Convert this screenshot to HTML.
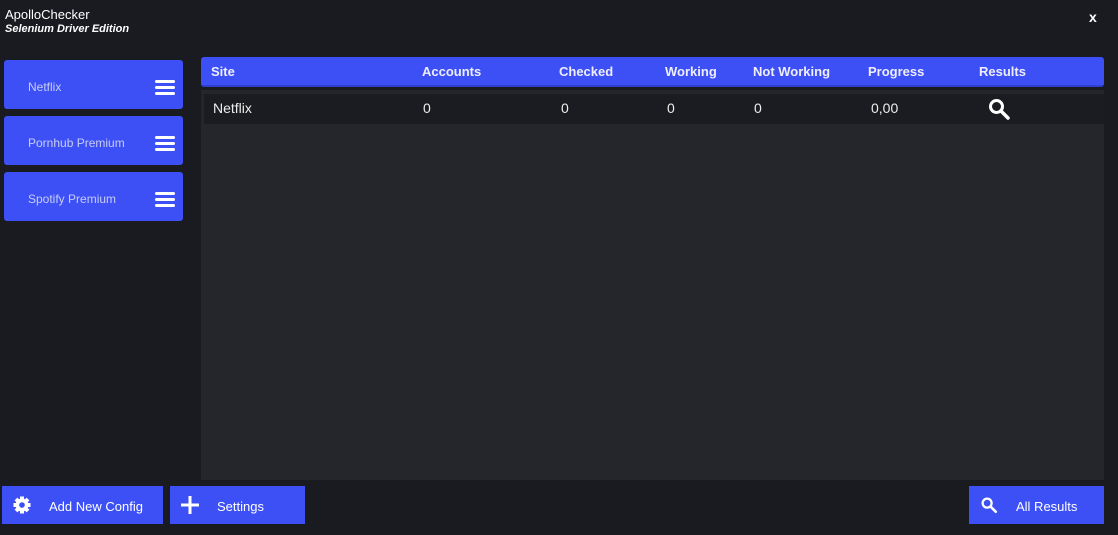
<!DOCTYPE html>
<html><head><meta charset="utf-8"><style>
*{margin:0;padding:0;box-sizing:border-box}
body{width:1118px;height:535px;background:#1a1b20;font-family:"Liberation Sans","DejaVu Sans",sans-serif;color:#fff;position:relative;overflow:hidden}
.a{position:absolute}
.blue{background:#3d50f5}
.side{left:4px;width:179px;height:49px;border-radius:3px}
.side span{position:absolute;left:24px;top:20px;font-size:12px;color:#c8cdf5}
.burg{position:absolute;right:8px;top:20px;width:20px}
.burg i{display:block;height:3px;background:#fff;border-radius:2px;margin-bottom:3px}
.hd{font-size:13px;top:64px;color:#eef;font-weight:bold}
.cell{font-size:14px;top:100px;color:#eee}
.btn{top:486px;height:38px;font-size:13px}
</style></head><body>
<div class="a" style="left:5px;top:7px;font-size:13px">ApolloChecker</div>
<div class="a" style="left:5px;top:23px;font-size:11px;font-style:italic;font-weight:bold">Selenium Driver Edition</div>
<div class="a" style="left:1089px;top:9px;font-size:14px;font-weight:bold">x</div>

<div class="a blue side" style="top:60px"><span>Netflix</span><div class="burg"><i></i><i></i><i></i></div></div>
<div class="a blue side" style="top:116px"><span>Pornhub Premium</span><div class="burg"><i></i><i></i><i></i></div></div>
<div class="a blue side" style="top:172px"><span>Spotify Premium</span><div class="burg"><i></i><i></i><i></i></div></div>

<div class="a" style="left:201px;top:90px;width:903px;height:390px;background:#25262b"></div>
<div class="a blue" style="left:201px;top:57px;width:903px;height:30px;border-radius:3px;border-bottom:2px solid #2f3fd0"></div>
<div class="a hd" style="left:211px">Site</div>
<div class="a hd" style="left:422px">Accounts</div>
<div class="a hd" style="left:559px">Checked</div>
<div class="a hd" style="left:665px">Working</div>
<div class="a hd" style="left:753px">Not Working</div>
<div class="a hd" style="left:868px">Progress</div>
<div class="a hd" style="left:979px">Results</div>

<div class="a" style="left:204px;top:94px;width:900px;height:30px;background:#1b1c21"></div>
<div class="a cell" style="left:213px">Netflix</div>
<div class="a cell" style="left:423px">0</div>
<div class="a cell" style="left:561px">0</div>
<div class="a cell" style="left:667px">0</div>
<div class="a cell" style="left:754px">0</div>
<div class="a cell" style="left:871px">0,00</div>
<svg class="a" style="left:987px;top:97px" width="24" height="24" viewBox="0 0 24 24"><circle cx="9.5" cy="9.5" r="6" stroke="#fff" stroke-width="3" fill="none"/><path d="M14 14l7 7" stroke="#fff" stroke-width="3.5" stroke-linecap="round"/></svg>

<div class="a blue btn" style="left:2px;width:161px"><svg class="a" style="left:11px;top:10px" width="18" height="18" viewBox="0 0 18 18"><g fill="#fff"><circle cx="9" cy="9" r="6.5"/><rect x="7" y="0.5" width="4" height="17"/><rect x="0.5" y="7" width="17" height="4"/><rect x="7" y="0.5" width="4" height="17" transform="rotate(45 9 9)"/><rect x="7" y="0.5" width="4" height="17" transform="rotate(-45 9 9)"/></g><circle cx="9" cy="9" r="2.8" fill="#3d50f5"/></svg><span class="a" style="left:47px;top:13px">Add New Config</span></div>
<div class="a blue btn" style="left:170px;width:135px"><svg class="a" style="left:11px;top:10px" width="18" height="18"><rect x="7.5" y="0" width="3" height="18" fill="#fff"/><rect x="0" y="7.5" width="18" height="3" fill="#fff"/></svg><span class="a" style="left:47px;top:13px">Settings</span></div>
<div class="a blue btn" style="left:969px;width:135px"><svg class="a" style="left:11px;top:10px" width="18" height="18" viewBox="0 0 24 24"><circle cx="9.5" cy="9.5" r="6" stroke="#fff" stroke-width="3" fill="none"/><path d="M14 14l7 7" stroke="#fff" stroke-width="3.5" stroke-linecap="round"/></svg><span class="a" style="left:47px;top:13px">All Results</span></div>
</body></html>
